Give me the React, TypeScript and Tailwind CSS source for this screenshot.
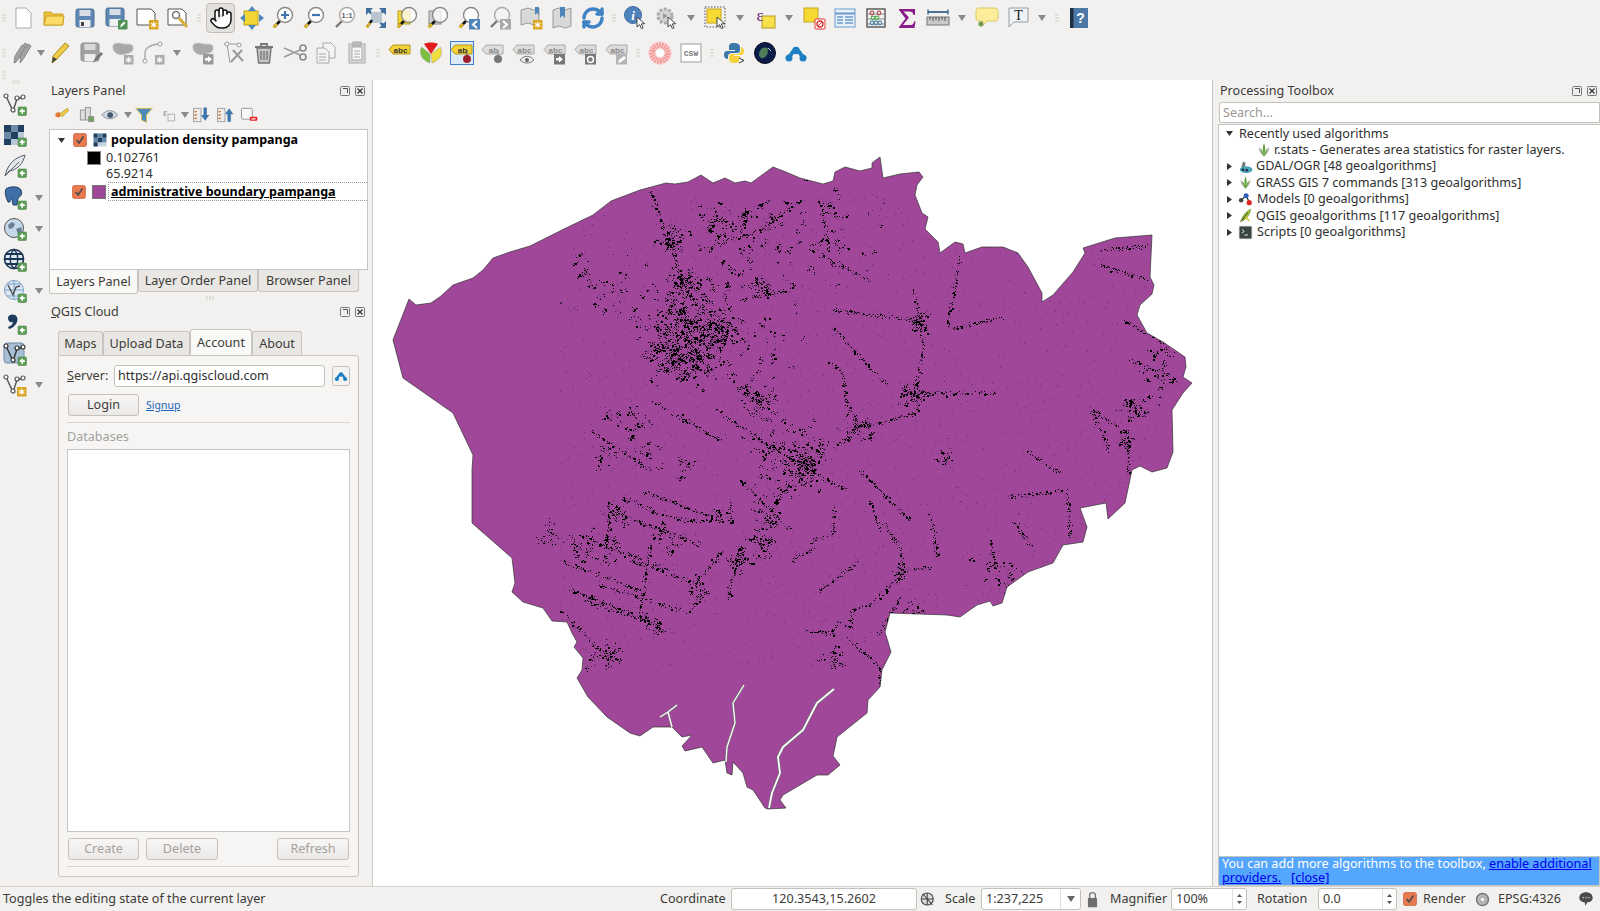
import { Hand, RefreshCw } from "lucide-react"
import type { ReactNode } from "react"

// ---- map data (page coordinates) ----
const outline =
  "M393 340 L409 299 L416 305 L431 303 L441 296 L453 285 L473 278 L483 270 L493 258 L510 252 L530 246 L566 228 L593 215 L611 201 L640 190 L666 183 L675 184 L688 182 L701 175 L713 183 L725 178 L735 183 L745 181 L751 183 L773 167 L786 172 L800 178 L823 184 L833 181 L835 172 L845 167 L860 171 L872 168 L872 163 L880 157 L883 178 L900 174 L919 172 L923 177 L917 185 L915 195 L922 213 L928 217 L925 229 L931 235 L938 242 L940 253 L955 242 L963 244 L965 253 L982 247 L1003 247 L1018 253 L1028 267 L1042 293 L1042 302 L1053 295 L1073 272 L1085 253 L1083 248 L1115 238 L1152 235 L1150 277 L1154 285 L1152 294 L1140 305 L1137 315 L1147 333 L1163 342 L1185 357 L1186 367 L1183 377 L1192 383 L1183 393 L1172 410 L1173 452 L1167 468 L1152 472 L1140 466 L1132 470 L1125 503 L1108 519 L1106 503 L1080 508 L1087 527 L1083 542 L1063 545 L1053 563 L1028 572 L1007 587 L1002 603 L993 606 L990 601 L977 605 L960 617 L947 615 L890 613 L885 632 L891 652 L882 670 L880 687 L868 700 L867 713 L837 737 L835 747 L833 756 L840 765 L828 775 L817 775 L783 795 L780 800 L786 808 L768 809 L765 808 L753 790 L747 787 L743 773 L733 762 L732 775 L727 773 L725 760 L713 763 L702 747 L685 751 L682 746 L692 735 L682 737 L672 727 L653 727 L640 736 L630 733 L607 717 L588 697 L577 678 L582 670 L583 658 L574 647 L577 642 L572 633 L567 622 L552 621 L543 608 L523 602 L512 592 L515 583 L512 558 L472 523 L472 470 L473 455 L453 413 L403 378 Z"

const clusters: number[][] = [
  [693, 325, 24, 1000], [668, 345, 14, 300], [715, 325, 12, 200], [680, 365, 12, 260], [708, 352, 14, 260],
  [683, 285, 9, 240], [672, 240, 7, 180], [756, 403, 9, 200], [790, 457, 20, 420], [805, 470, 10, 160],
  [760, 285, 5, 80], [716, 223, 9, 130], [743, 220, 6, 70], [610, 283, 20, 130], [586, 265, 6, 30],
  [610, 453, 8, 50], [626, 420, 10, 90], [645, 448, 9, 60], [683, 467, 5, 50], [617, 512, 7, 90],
  [550, 533, 6, 60], [580, 545, 9, 90], [610, 543, 9, 80], [668, 540, 8, 90], [740, 557, 7, 120],
  [760, 543, 8, 130], [725, 513, 5, 50], [767, 517, 7, 90], [698, 587, 5, 50], [653, 625, 7, 80],
  [613, 650, 6, 50], [600, 662, 8, 50], [858, 427, 7, 120], [918, 322, 6, 110], [913, 393, 7, 100],
  [1130, 410, 7, 130], [1160, 383, 9, 80], [1163, 357, 7, 60], [1128, 440, 5, 50], [943, 463, 5, 50],
  [815, 467, 9, 90], [903, 573, 4, 60], [833, 657, 6, 80], [913, 610, 5, 40], [1000, 575, 12, 80],
  [760, 345, 25, 150], [820, 240, 30, 110], [850, 230, 25, 70], [780, 250, 20, 120], [735, 265, 14, 90],
]

const roads: number[][][] = [
  [[650, 190], [660, 220], [672, 245], [678, 270], [690, 300]],
  [[833, 446], [850, 437], [858, 427], [880, 423], [917, 412], [917, 380], [923, 347], [920, 317], [913, 290]],
  [[913, 393], [997, 393]],
  [[833, 310], [917, 320]],
  [[833, 328], [887, 385]],
  [[827, 360], [843, 373], [845, 400], [860, 427]],
  [[1123, 320], [1163, 343]],
  [[1128, 433], [1128, 473]],
  [[1028, 452], [1060, 473]],
  [[1090, 408], [1128, 433]],
  [[960, 257], [947, 327]],
  [[953, 328], [1003, 317]],
  [[723, 550], [698, 580], [703, 593], [688, 613]],
  [[740, 560], [728, 587], [730, 598]],
  [[793, 560], [810, 550], [813, 540], [833, 533], [833, 507]],
  [[623, 497], [657, 513], [683, 520], [723, 520]],
  [[583, 600], [653, 623]],
  [[630, 560], [697, 583]],
  [[600, 585], [680, 610]],
  [[803, 630], [833, 633], [837, 622], [850, 627], [852, 610], [873, 602], [903, 573]],
  [[903, 573], [900, 547], [883, 523]],
  [[903, 570], [930, 567]],
  [[930, 513], [937, 557]],
  [[1007, 497], [1063, 490]],
  [[1067, 490], [1070, 537]],
  [[1013, 520], [1033, 550]],
  [[847, 637], [880, 667], [880, 687]],
  [[900, 597], [877, 637]],
  [[770, 200], [740, 215]],
  [[714, 408], [760, 440], [800, 465], [847, 490]],
  [[790, 480], [760, 530]],
  [[700, 250], [760, 230], [800, 200]],
  [[740, 300], [790, 290]],
  [[820, 200], [830, 260], [870, 280]],
  [[560, 560], [640, 590]],
  [[570, 590], [650, 620]],
  [[590, 540], [670, 570]],
  [[610, 510], [700, 545]],
  [[640, 490], [720, 520]],
  [[610, 500], [605, 560]],
  [[650, 545], [640, 610]],
  [[1090, 408], [1110, 450]],
  [[1130, 360], [1170, 375]],
  [[1100, 250], [1150, 245]],
  [[1100, 265], [1150, 280]],
  [[880, 530], [870, 500]],
  [[820, 590], [860, 560]],
  [[990, 540], [1000, 590]],
  [[590, 430], [650, 470]],
  [[650, 400], [720, 440]],
  [[740, 480], [790, 530]],
  [[860, 470], [910, 520]],
  [[560, 610], [610, 660]],
]

function buildSpecks() {
  let s = 20240611
  const rnd = () => {
    s = (s * 1664525 + 1013904223) >>> 0
    return s / 4294967296
  }
  const gauss = () => rnd() + rnd() + rnd() - 1.5
  let dark = ""
  let faint = ""
  const put = (x: number, y: number) => {
    const r = rnd()
    const w = r > 0.88 ? 2 : 1
    const d = `M${x.toFixed(0)} ${y.toFixed(0)}h${w}v${r > 0.94 ? 2 : 1}h-${w}z`
    if (r < 0.4) faint += d
    else dark += d
  }
  // grainy clusters: little knots of dots around random sub centres
  clusters.forEach(([cx, cy, rad, n]) => {
    let left = n
    while (left > 0) {
      const sx = cx + gauss() * rad * 1.9
      const sy = cy + gauss() * rad * 1.9
      const k = 2 + Math.floor(rnd() * 6)
      for (let i = 0; i < k; i++) put(sx + gauss() * 3, sy + gauss() * 3)
      left -= k
    }
  })
  roads.forEach((line) => {
    for (let i = 0; i < line.length - 1; i++) {
      const [x1, y1] = line[i]
      const [x2, y2] = line[i + 1]
      const n = Math.hypot(x2 - x1, y2 - y1) * 1.1
      for (let k = 0; k < n; k++) {
        const t = rnd()
        put(x1 + (x2 - x1) * t + gauss() * 2.2, y1 + (y2 - y1) * t + gauss() * 2.2)
      }
    }
  })
  // faint noise all over the middle of the map
  for (let i = 0; i < 1500; i++) {
    const x = 560 + rnd() * 600
    const y = 190 + rnd() * 480
    faint += `M${x.toFixed(0)} ${y.toFixed(0)}h1v1h-1z`
  }
  return { dark, faint }
}
const specks = buildSpecks()

function MapView() {
  return (
    <svg viewBox="373 80 839 806" className="w-full h-full block">
      <defs>
        <clipPath id="boundary">
          <path d={outline} />
        </clipPath>
      </defs>
      <path d={outline} fill="#a0479a" stroke="#333" strokeWidth="0.7" />
      <g clipPath="url(#boundary)">
        <path d={specks.faint} fill="#69316a" />
        <path d={specks.dark} fill="#000" />
      </g>
      <g fill="none" stroke="#6d6d6d" strokeLinejoin="round">
        <path d="M744 685 L733 703 L735 723 L727 747 L726 762" strokeWidth="2.4" />
        <path d="M834 689 L817 703 L803 730 L783 747 L778 757 L780 773 L772 793 L769 808" strokeWidth="3" />
        <path d="M660 717 L668 712 L677 705 M668 712 L672 727" strokeWidth="2.4" />
      </g>
      <g fill="none" stroke="#fff" strokeLinejoin="round">
        <path d="M744 685 L733 703 L735 723 L727 747 L726 762" strokeWidth="1.3" />
        <path d="M834 689 L817 703 L803 730 L783 747 L778 757 L780 773 L772 793 L769 808" strokeWidth="1.8" />
        <path d="M660 717 L668 712 L677 705 M668 712 L672 727" strokeWidth="1.4" />
      </g>
    </svg>
  )
}

// ---- icons ----
function Ic({ children, size = 24 }: { children: ReactNode; size?: number }) {
  return (
    <svg width={size} height={size} viewBox="0 0 24 24" className="shrink-0">
      {children}
    </svg>
  )
}

const Plus = () => (
  <g>
    <rect x="15" y="15" width="8.5" height="8.5" rx="1" fill="#5f9e58" stroke="#3f7a3c" strokeWidth="0.5" />
    <path d="M19.2 16.8v5M16.8 19.2h5" stroke="#fff" strokeWidth="1.7" />
  </g>
)
const Star = ({ fill = "#d9a520" }: { fill?: string }) => (
  <g>
    <rect x="14" y="14" width="9.5" height="9.5" fill={fill} />
    <path d="M18.7 15.8v6M15.9 17.2l5.6 3.2M15.9 20.4l5.6-3.2" stroke="#fff" strokeWidth="1.1" />
  </g>
)
const VShape = ({ c = "#555" }: { c?: string }) => (
  <g fill="#fff" stroke={c} strokeWidth="1.2">
    <path d="M3 4L10 19L14 7L20 5" fill="none" strokeWidth="1.4" />
    <circle cx="3" cy="4" r="2" />
    <circle cx="10" cy="18" r="2" />
    <circle cx="14" cy="6" r="2" />
    <circle cx="20" cy="5" r="2" />
  </g>
)
const Lens = ({ fill = "#fff", c = "#8a8a8a" }: { fill?: string; c?: string }) => (
  <g>
    <path d="M9 15L3 21" stroke="#111" strokeWidth="2.6" />
    <path d="M6 18L2.5 21.5" stroke="#e0b52a" strokeWidth="2.6" />
    <circle cx="14" cy="9" r="7.5" fill={fill} fillOpacity="0.75" stroke={c} strokeWidth="1.4" />
  </g>
)
const Cursor = () => (
  <path d="M13 11l0 10 2.6-2.4 1.8 4 1.7-.8-1.8-3.9 3.4-.2z" fill="#fff" stroke="#333" strokeWidth="0.9" />
)
const GreyLens = () => (
  <g>
    <path d="M9 15L3 21" stroke="#777" strokeWidth="2.4" />
    <circle cx="14" cy="9" r="7.5" fill="#f4f4f4" stroke="#aaa" strokeWidth="1.4" />
  </g>
)
const Tag = ({ fill, stroke, c, text = "abc" }: { fill: string; stroke: string; c: string; text?: string }) => (
  <g>
    <path d="M5 4H22V13H5L1 8.5Z" fill={fill} stroke={stroke} strokeWidth="1" />
    <text x="12.5" y="11.5" fontSize="8" fontWeight="700" textAnchor="middle" fill={c} fontFamily="Liberation Sans, sans-serif">
      {text}
    </text>
  </g>
)
const Blob = () => (
  <path d="M3 6C3 1 10 2 13 3C18 4 23 2 23 7C23 12 18 12 15 13C10 15 3 12 3 6Z" fill="#a8a8a8" stroke="#bbb" />
)
const GBadge = ({ children }: { children: ReactNode }) => (
  <g>
    <rect x="13" y="13" width="10.5" height="10.5" rx="1" fill="#999" />
    {children}
  </g>
)
const GlobeBase = ({ land = "#6a7f94", sea = "#c5d9ea" }: { land?: string; sea?: string }) => (
  <g>
    <circle cx="11" cy="11" r="9.5" fill={sea} stroke="#555" />
    <path d="M5 8l4-3 3 2-2 4-4 1zM13 12l5-2 1 4-4 3z" fill={land} />
  </g>
)

const icons: Record<string, ReactNode> = {
  newFile: <path d="M5 2H15L20 7V22H5Z" fill="#fff" stroke="#a9a9a9" />,
  open: (
    <g stroke="#c9a227">
      <path d="M2 6H9L11 8H21V19H2Z" fill="#eec23f" />
      <path d="M2 19L4 10H22L20.5 19Z" fill="#fbdc67" />
    </g>
  ),
  save: (
    <g>
      <rect x="3" y="3" width="18" height="18" rx="2" fill="#5f87b3" stroke="#4b6f96" />
      <rect x="6.5" y="4" width="11" height="6" fill="#d6dde6" />
      <rect x="6.5" y="14" width="11" height="7" fill="#eef0f2" />
      <rect x="8" y="16" width="3" height="4" fill="#444" />
    </g>
  ),
  saveAs: (
    <g>
      <rect x="2" y="2" width="18" height="18" rx="2" fill="#5f87b3" stroke="#4b6f96" />
      <rect x="5.5" y="3" width="11" height="6" fill="#d6dde6" />
      <rect x="5.5" y="13" width="11" height="7" fill="#eef0f2" />
      <rect x="14" y="14" width="9.5" height="9.5" rx="1" fill="#4f9156" />
      <path d="M16 21.5l1-3 3-3 1.5 1.5-3 3z" fill="#fff" />
    </g>
  ),
  newLayout: (
    <g>
      <path d="M2 3H16L20 7V19H2Z" fill="#fff" stroke="#555" />
      <Star />
    </g>
  ),
  layoutMgr: (
    <g>
      <path d="M2 3H16L20 7V19H2Z" fill="#fff" stroke="#555" />
      <circle cx="10" cy="9" r="3.5" fill="none" stroke="#777" strokeWidth="1.6" />
      <path d="M13 12L21 21" stroke="#d7ad3a" strokeWidth="3" />
    </g>
  ),
  pan: <Hand size={24} strokeWidth={1.5} color="#111" fill="#fff" />,
  panSel: (
    <g>
      <rect x="4" y="5" width="14" height="14" fill="#f2d635" stroke="#b9a21e" />
      <path d="M12 0l4 5h-8zM12 24l-4-5h8zM0 12l5-4v8zM24 12l-5 4v-8z" fill="#4d86bd" />
    </g>
  ),
  zoomIn: (
    <g>
      <Lens />
      <path d="M14 5v8M10 9h8" stroke="#3f76ad" strokeWidth="2.2" />
    </g>
  ),
  zoomOut: (
    <g>
      <Lens />
      <path d="M10 9h8" stroke="#3f76ad" strokeWidth="2.2" />
    </g>
  ),
  zoomOne: (
    <g>
      <path d="M9 15L3 21" stroke="#777" strokeWidth="2.4" />
      <circle cx="14" cy="9" r="7.5" fill="#fff" stroke="#aaa" strokeWidth="1.4" />
      <text x="14" y="12" fontSize="8" fontWeight="700" textAnchor="middle" fill="#666" fontFamily="Liberation Sans, sans-serif">
        1:1
      </text>
    </g>
  ),
  zoomFull: (
    <g>
      <path d="M2 2H9L6.5 4.5 9.5 8 8 9.5 4.5 6.5 2 9ZM22 2H15L17.5 4.5 14.5 8 16 9.5 19.5 6.5 22 9ZM22 22H15L17.5 19.5 14.5 16 16 14.5 19.5 17.5 22 15Z" fill="#3f6f9e" />
      <rect x="7" y="6" width="11" height="11" fill="#b9c6d2" />
      <path d="M8 14L3 21" stroke="#111" strokeWidth="2.4" />
      <path d="M6 17L2.5 21.5" stroke="#e0b52a" strokeWidth="2.4" />
    </g>
  ),
  zoomSel: (
    <g>
      <rect x="3" y="5" width="12" height="13" fill="#f2d635" stroke="#b9a21e" />
      <Lens />
    </g>
  ),
  zoomLayer: (
    <g>
      <rect x="3" y="5" width="12" height="13" fill="#ccc" stroke="#888" />
      <Lens />
    </g>
  ),
  zoomLast: (
    <g>
      <Lens />
      <rect x="12" y="13" width="11" height="10.5" fill="#4e85bb" />
      <path d="M20 15l-4 3.5 4 3.5" fill="none" stroke="#fff" strokeWidth="2" />
    </g>
  ),
  zoomNext: (
    <g>
      <GreyLens />
      <rect x="12" y="13" width="11" height="10.5" fill="#aaa" />
      <path d="M15 15l4 3.5-4 3.5" fill="none" stroke="#fff" strokeWidth="2" />
    </g>
  ),
  newView: (
    <g>
      <path d="M2 4L9 2L15 4L20 2V17L15 19L9 17L2 19Z" fill="#d8d8d6" stroke="#999" />
      <path d="M16 1h4v8l-2-2-2 2z" fill="#4e85bb" />
      <Star />
    </g>
  ),
  bookmarks: (
    <g>
      <path d="M3 4L9 2L15 4L21 2V20L15 22L9 20L3 22Z" fill="#d8d8d6" stroke="#999" />
      <path d="M10 1h5v11l-2.5-2.5L10 12z" fill="#4e85bb" />
    </g>
  ),
  refresh: <RefreshCw size={24} strokeWidth={3.4} color="#3f82c4" />,
  identify: (
    <g>
      <circle cx="9" cy="9" r="8.5" fill="#4f83bb" stroke="#3d6d9f" />
      <text x="9" y="14" fontSize="13" fontStyle="italic" fontWeight="700" textAnchor="middle" fill="#fff" fontFamily="Liberation Serif, serif">
        i
      </text>
      <Cursor />
    </g>
  ),
  runAction: (
    <g>
      <circle cx="10" cy="10" r="7" fill="#d7d7d7" stroke="#aaa" strokeWidth="3" strokeDasharray="3 1.5" />
      <path d="M8 7l5 3-5 3z" fill="#999" />
      <Cursor />
    </g>
  ),
  select: (
    <g>
      <rect x="1" y="1" width="20" height="20" fill="none" stroke="#555" strokeDasharray="1.5 1.5" />
      <rect x="3" y="3" width="14" height="14" fill="#f7d934" stroke="#c6a61f" />
      <Cursor />
    </g>
  ),
  expr: (
    <g>
      <rect x="9" y="10" width="13" height="12" fill="#f7e04b" stroke="#b49b1d" />
      <text x="7" y="15" fontSize="17" textAnchor="middle" fill="#6c1f7c" fontFamily="Liberation Serif, serif">
        ε
      </text>
    </g>
  ),
  deselect: (
    <g>
      <rect x="2" y="2" width="14" height="14" fill="#f7d934" stroke="#c6a61f" />
      <rect x="13" y="13" width="10" height="10" rx="1" fill="#fff" stroke="#d33" />
      <circle cx="18" cy="18" r="3" fill="none" stroke="#d33" strokeWidth="1.4" />
      <path d="M16 20l4-4" stroke="#d33" />
    </g>
  ),
  table: (
    <g stroke="#6b9bcb">
      <rect x="2" y="3" width="20" height="18" fill="#e8f0f8" />
      <path d="M2 7.5h20" strokeWidth="2" />
      <path d="M4 11h6M12 11h8M4 14h6M12 14h8M4 17h6M12 17h8" strokeWidth="1.4" />
    </g>
  ),
  stats: (
    <g>
      <rect x="3" y="3" width="18" height="18" fill="#f3f3f3" stroke="#555" strokeWidth="1.4" />
      <path d="M3 8h18M3 13h18M3 18h18" stroke="#888" />
      <g fill="none" strokeWidth="1.2">
        <circle cx="8" cy="7" r="1.8" stroke="#b55" />
        <circle cx="15" cy="7" r="1.8" stroke="#b55" />
        <circle cx="9" cy="12" r="1.8" stroke="#5a5" />
        <circle cx="13" cy="12" r="1.8" stroke="#5a5" />
        <circle cx="8" cy="17" r="1.8" stroke="#58a" />
        <circle cx="12" cy="17" r="1.8" stroke="#58a" />
        <circle cx="16" cy="17" r="1.8" stroke="#58a" />
      </g>
    </g>
  ),
  sigma: <path d="M4 3H20V9H18.5C18 6.5 17 5.5 14 5.5H8.5L14 11.5L8 19H15C18 19 18.6 17.5 19 15.5H20.5L19.5 22H4V21L10.5 12.5L4 4Z" fill="#8a1c8c" />,
  measure: (
    <g>
      <path d="M2 6h20" stroke="#26547f" strokeWidth="1.6" />
      <path d="M2 3.5v5M22 3.5v5" stroke="#26547f" strokeWidth="1.2" />
      <rect x="1" y="11" width="22" height="8" fill="#c8c8c8" stroke="#777" />
      <path d="M4 11v3M7 11v4M10 11v3M13 11v4M16 11v3M19 11v4" stroke="#555" />
    </g>
  ),
  tip: (
    <g>
      <path d="M4 2H20C22 2 23 3.5 23 5V12C23 14 21.5 15 20 15H12L7 20L7.5 15H4C2 15 1 13.5 1 12V5C1 3.5 2 2 4 2Z" fill="#fbed9b" stroke="#d8c762" />
      <circle cx="6" cy="18" r="2.5" fill="#6d9a50" />
    </g>
  ),
  textAnn: (
    <g>
      <path d="M3 2H22V16H8L3 21Z" fill="#eef3f7" stroke="#999" />
      <text x="12.5" y="14" fontSize="14" textAnchor="middle" fill="#222" fontFamily="Liberation Serif, serif">
        T
      </text>
    </g>
  ),
  help: (
    <g>
      <rect x="3" y="2" width="18" height="20" fill="#4c78a8" />
      <rect x="3" y="2" width="3.5" height="20" fill="#1e2f44" />
      <text x="13.5" y="17" fontSize="14" fontWeight="700" textAnchor="middle" fill="#fff" fontFamily="Liberation Sans, sans-serif">
        ?
      </text>
    </g>
  ),
  pencils: (
    <g fill="#a3a3a3" stroke="#8c8c8c">
      <path d="M4 22L6 12L14 2L17 4L9 16Z" />
      <path d="M9 22L10 13L17 3L20 5L13 17Z" />
      <path d="M3 22L4 15L11 4L14 6L7 18Z" />
    </g>
  ),
  pencil: (
    <g>
      <path d="M4 22L5 15L17 2L21 5L9 18Z" fill="#f0cc46" stroke="#a58a24" />
      <path d="M4 22L5 16L9 18Z" fill="#444" />
    </g>
  ),
  saveEdit: (
    <g>
      <rect x="2" y="2" width="18" height="18" rx="2" fill="#a2a2a2" stroke="#8f8f8f" />
      <rect x="5.5" y="3" width="11" height="6" fill="#dadada" />
      <rect x="5.5" y="13" width="11" height="7" fill="#ededed" />
      <path d="M14 22l2-5 6-6 2 2-6 6z" fill="#777" />
    </g>
  ),
  addPoly: (
    <g>
      <Blob />
      <Star fill="#aaa" />
    </g>
  ),
  addCurve: (
    <g>
      <path d="M4 19V12C4 7 10 3 19 3" fill="none" stroke="#aaa" strokeWidth="1.4" />
      <circle cx="4" cy="20" r="2" fill="#fff" stroke="#999" />
      <circle cx="19" cy="3" r="2" fill="#fff" stroke="#999" />
      <Star fill="#aaa" />
    </g>
  ),
  movePoly: (
    <g>
      <Blob />
      <GBadge>
        <path d="M15 17h3v-2l4 3.2-4 3.3v-2h-3z" fill="#fff" />
      </GBadge>
    </g>
  ),
  nodeTool: (
    <g>
      <path d="M3 3H18M6 3L9 22" stroke="#999" fill="none" />
      <circle cx="6" cy="3" r="2" fill="#fff" stroke="#999" />
      <circle cx="18" cy="4" r="2" fill="#fff" stroke="#999" />
      <path d="M10 21L21 9M12 9L22 20" stroke="#999" strokeWidth="2" />
    </g>
  ),
  trash: (
    <g fill="none" stroke="#777">
      <path d="M3 6H21M9 5V3H15V5" strokeWidth="1.8" />
      <path d="M5 7L6.5 22H17.5L19 7Z" fill="#c4c4c4" strokeWidth="1.4" />
      <path d="M9 10V19M12 10V19M15 10V19" strokeWidth="1.4" />
    </g>
  ),
  cut: (
    <g fill="none" stroke="#a0a0a0">
      <path d="M1 7L17 14M1 16L17 9" strokeWidth="1.8" />
      <circle cx="20" cy="7" r="3" strokeWidth="1.6" stroke="#888" />
      <circle cx="20" cy="16" r="3" strokeWidth="1.6" stroke="#888" />
    </g>
  ),
  copy: (
    <g fill="#f4f4f4" stroke="#aaa">
      <path d="M9 2H17L21 6V17H9Z" />
      <path d="M3 7H11L15 11V22H3Z" />
      <path d="M5 13H12M5 16H12M5 19H12" />
    </g>
  ),
  paste: (
    <g stroke="#aaa">
      <rect x="4" y="3" width="16" height="19" fill="#d9d9d9" />
      <rect x="7" y="6" width="10" height="13" fill="#f6f6f6" />
      <rect x="8" y="1" width="8" height="4" fill="#bbb" />
      <path d="M9 10H15M9 13H15M9 16H15" />
    </g>
  ),
  labelAbc: <Tag fill="#f2d236" stroke="#b0971f" c="#333" />,
  pie: (
    <g>
      <path d="M12 13L5 3C8 1 16 1 19 3Z" fill="#e02020" />
      <path d="M12 13L21.5 6C24 12 22 19 13 22Z" fill="#f0de3c" stroke="#999" strokeWidth="0.5" />
      <path d="M11 13L2.5 6C0 12 2 19 11 22Z" fill="#7cbf3c" stroke="#999" strokeWidth="0.5" />
    </g>
  ),
  labelPin: (
    <g>
      <rect x="0.5" y="0.5" width="23" height="23" fill="#dce9f7" stroke="#3f7fcc" />
      <Tag fill="#f2d236" stroke="#b0971f" c="#333" text="ab" />
      <path d="M17 9v6" stroke="#555" />
      <circle cx="17" cy="18" r="4" fill="#a01f2c" />
    </g>
  ),
  labelGrey: (
    <g>
      <Tag fill="#ddd" stroke="#aaa" c="#888" text="ab" />
      <path d="M17 9v6" stroke="#888" />
      <circle cx="17" cy="18" r="4" fill="#777" />
    </g>
  ),
  labelEye: (
    <g>
      <Tag fill="#ddd" stroke="#aaa" c="#888" />
      <path d="M8 19C12 14 18 14 22 19C18 23 12 23 8 19Z" fill="#eee" stroke="#777" />
      <circle cx="15" cy="19" r="2" fill="#666" />
    </g>
  ),
  labelMove: (
    <g>
      <Tag fill="#ddd" stroke="#aaa" c="#888" />
      <rect x="11" y="13" width="11" height="10.5" fill="#777" />
      <path d="M13 17h3v-2l4 3.2-4 3.3v-2h-3z" fill="#fff" />
    </g>
  ),
  labelRotate: (
    <g>
      <Tag fill="#ddd" stroke="#aaa" c="#888" />
      <rect x="11" y="13" width="11" height="10.5" fill="#777" />
      <circle cx="16.5" cy="18.5" r="3" fill="none" stroke="#fff" strokeWidth="1.5" />
    </g>
  ),
  labelEdit: (
    <g>
      <Tag fill="#ddd" stroke="#aaa" c="#888" />
      <rect x="11" y="13" width="11" height="10.5" fill="#b5b5b5" />
      <path d="M13 22l1-3 5-4 2 2-5 4z" fill="#fff" />
    </g>
  ),
  rose: (
    <g>
      <circle cx="12" cy="12" r="8" fill="none" stroke="#f69a9a" strokeWidth="6.5" strokeDasharray="2 0.6" />
      <circle cx="12" cy="12" r="11" fill="none" stroke="#fbd2d2" strokeWidth="1.6" strokeDasharray="2 1.4" />
      <circle cx="12" cy="12" r="3.6" fill="#fff" />
    </g>
  ),
  csw: (
    <g>
      <rect x="2" y="3" width="20" height="18" fill="#fff" stroke="#bbb" strokeWidth="1.5" />
      <text x="12" y="15" fontSize="8" fontWeight="700" textAnchor="middle" fill="#777" fontFamily="Liberation Mono, monospace">
        CSW
      </text>
    </g>
  ),
  python: (
    <g>
      <path d="M12 2C7 2 7 4 7 7V9H13V10H5C2 10 2 13 2 14C2 17 4 18 6 18V15C6 13 8 12 10 12H15C17 12 18 11 18 9V6C18 3 15 2 12 2Z" fill="#3b78aa" />
      <path d="M12 22C17 22 18 20 18 17V15H12V14H19C22 14 22 11 22 10C22 7 20 6 19 6V9C19 11 17 13 15 13H10C8 13 7 14 7 16V18C7 21 9 22 12 22Z" fill="#f5d13c" />
      <path d="M17 17l5 2.5-5 2.5" fill="#fff" stroke="#333" />
    </g>
  ),
  globe: (
    <g>
      <circle cx="12" cy="12" r="10.5" fill="#0c1c4a" stroke="#050a20" />
      <path d="M6 14C6 8 11 5 15 7C14 10 16 12 13 15C11 18 7 18 6 14Z" fill="#4f7d58" />
      <path d="M15 7l3 3" stroke="#cfd8e6" />
    </g>
  ),
  cloud: (
    <g>
      <path d="M5 16.5L8 12C10 8.5 14 8.5 16 12L19 16.5" fill="none" stroke="#1d7fc1" strokeWidth="4" />
      <circle cx="12" cy="9.5" r="3.8" fill="#1d7fc1" />
      <circle cx="5" cy="17" r="3.5" fill="#1d7fc1" />
      <circle cx="19" cy="17" r="3.5" fill="#1d7fc1" />
    </g>
  ),
  addVector: (
    <g>
      <VShape />
      <Plus />
    </g>
  ),
  addRaster: (
    <g>
      <rect x="1" y="2" width="20" height="20" fill="#b9c6d3" />
      <path d="M1 2h7v7H1zM8 9h7v7H8zM15 2h6v7h-6zM1 16h7v6H1z" fill="#21405f" />
      <path d="M8 2h7v7H8zM1 9h7v7H1z" fill="#6e8aa6" />
      <Plus />
    </g>
  ),
  addText: (
    <g>
      <path d="M2 22C4 12 10 4 22 1C20 10 14 16 6 17Z" fill="#e3e7ea" stroke="#56606b" />
      <path d="M2 22L16 8" stroke="#56606b" />
      <Plus />
    </g>
  ),
  addPg: (
    <g>
      <path d="M3 3C7 0 16 0 18 4C20 8 17 11 15 12L14 19H10L9 13C8 13 7 14 7 16H5C4 13 1 8 3 3Z" fill="#3f6fa8" stroke="#23405f" />
      <Plus />
    </g>
  ),
  addWms: (
    <g>
      <GlobeBase />
      <Plus />
    </g>
  ),
  addWcs: (
    <g>
      <circle cx="11" cy="11" r="9.5" fill="#dfe9f2" stroke="#1b3553" strokeWidth="1.6" />
      <path d="M1.5 11h19M3 6h16M3 16h16" stroke="#1b3553" strokeWidth="2" />
      <path d="M11 1.5C6 6 6 16 11 20.5C16 16 16 6 11 1.5Z" fill="none" stroke="#1b3553" strokeWidth="1.4" />
      <Plus />
    </g>
  ),
  addWfs: (
    <g>
      <circle cx="11" cy="11" r="9.5" fill="#dbe8f4" stroke="#7ba3c9" />
      <path d="M1.5 11h19M11 1.5v19M4 5h14M4 17h14" stroke="#7ba3c9" />
      <path d="M5 6L10 16L13 8L17 7" fill="none" stroke="#444" strokeWidth="1.3" />
      <Plus />
    </g>
  ),
  addComma: (
    <g>
      <path d="M5 7C5 3 12 2 14 6C16 11 11 17 6 18L5 16C8 15 10 13 10 11C7 12 5 10 5 7Z" fill="#1e3c5c" />
      <Plus />
    </g>
  ),
  addVirtual: (
    <g>
      <rect x="1" y="1" width="20" height="20" rx="3" fill="#a9bfd6" stroke="#6e8aa6" />
      <VShape c="#333" />
      <Plus />
    </g>
  ),
  newShape: (
    <g>
      <VShape />
      <Star />
    </g>
  ),
  // panel mini toolbar
  style: (
    <g>
      <path d="M3 11C4 8 8 8 10 10L8 15L3 14Z" fill="#e07b39" />
      <path d="M8 11L17 4L19 6L11 14Z" fill="#f1cc46" stroke="#b39a28" />
    </g>
  ),
  addGroup: (
    <g fill="#ddd" stroke="#888">
      <rect x="4" y="6" width="6" height="12" />
      <rect x="10" y="3" width="6" height="15" />
      <rect x="14" y="14" width="6" height="6" fill="#6fa55c" />
    </g>
  ),
  eye: (
    <g>
      <path d="M1 12C6 5 15 5 20 12C15 18 6 18 1 12Z" fill="#ccd7e2" stroke="#7c8894" />
      <circle cx="11" cy="12" r="3.4" fill="#44596e" />
    </g>
  ),
  filter: <path d="M2 4H22L15 12V21L9 18V12Z" fill="#4c8ab8" stroke="#e7c340" />,
  filterExpr: (
    <g>
      <text x="6" y="13" fontSize="13" fill="#888" fontFamily="Liberation Serif, serif">
        ε
      </text>
      <rect x="12" y="11" width="8" height="8" fill="none" stroke="#aaa" />
    </g>
  ),
  expand: (
    <g>
      <rect x="3" y="4" width="9" height="16" fill="#ececec" stroke="#999" />
      <path d="M4 8h3M4 12h3M4 16h3" stroke="#d8772f" strokeWidth="1.6" />
      <path d="M15 3h4v9h3l-5 7-5-7h3z" fill="#3f76ad" />
    </g>
  ),
  collapse: (
    <g>
      <rect x="3" y="4" width="9" height="16" fill="#ececec" stroke="#999" />
      <path d="M4 8h3M4 12h3M4 16h3" stroke="#d8772f" strokeWidth="1.6" />
      <path d="M15 20h4v-9h3l-5-7-5 7h3z" fill="#3f76ad" />
    </g>
  ),
  removeLayer: (
    <g>
      <rect x="3" y="4" width="13" height="13" rx="1.5" fill="#f8f8f8" stroke="#888" />
      <rect x="13" y="14" width="9" height="5" rx="1" fill="#e22" />
      <rect x="15" y="16" width="5" height="1.4" fill="#fff" />
    </g>
  ),
  grass: (
    <g fill="none" strokeWidth="1.8">
      <path d="M12 21C5 17 4 11 4 7C7 10 11 14 12 21Z" fill="#bfbfbf" />
      <path d="M12 21C19 17 20 11 20 7C17 10 13 14 12 21Z" fill="#bfbfbf" />
      <path d="M12 20C9 13 10 7 12 2C14 7 15 13 12 20Z" fill="#63a33d" />
      <path d="M12 21L7 11M12 21L17 11" stroke="#63a33d" />
    </g>
  ),
  gdal: (
    <g>
      <path d="M5 14L8 4L12 6L11 14Z" fill="#777" />
      <ellipse cx="13" cy="17" rx="10" ry="5.5" fill="#44a4b4" />
      <circle cx="8" cy="17" r="2" fill="#224" />
      <circle cx="14" cy="18" r="2" fill="#224" />
    </g>
  ),
  models: (
    <g>
      <path d="M5 13L13 6L18 16" stroke="#222" strokeWidth="2" fill="none" />
      <circle cx="5" cy="13" r="3.6" fill="#444" />
      <circle cx="13" cy="6" r="4" fill="#2f62b5" />
      <circle cx="18" cy="17" r="4.2" fill="#e02525" />
    </g>
  ),
  qgis: (
    <g>
      <path d="M4 22C8 12 12 6 20 2C19 10 15 17 4 22Z" fill="#a9cf3c" stroke="#5c7d1e" />
      <path d="M6 20L16 7" stroke="#222" strokeWidth="1.4" />
      <path d="M12 14l6 7" stroke="#d9c22a" strokeWidth="2.4" />
    </g>
  ),
  scripts: (
    <g>
      <rect x="2" y="2" width="20" height="20" rx="2" fill="#3b4540" stroke="#aab" />
      <path d="M6 7l4 3-4 3M10 16h6" stroke="#dfe" strokeWidth="1.4" fill="none" />
    </g>
  ),
  checkbox: (
    <g>
      <rect x="1" y="1" width="22" height="22" rx="3" fill="#ea7a4f" stroke="#c9643d" strokeWidth="1.4" />
      <path d="M6 12l4.5 5L18 6" fill="none" stroke="#4d4d4d" strokeWidth="3" />
    </g>
  ),
  raster: (
    <g>
      <rect x="1" y="1" width="22" height="22" fill="#c7d3de" />
      <path d="M1 1h7v7H1zM16 1h7v7h-7zM8 8h8v8H8zM1 16h7v7H1z" fill="#1f3d5c" />
      <path d="M8 1h8v7H8zM1 8h7v8H1zM16 8h7v8h-7z" fill="#5f85a8" />
    </g>
  ),
  epsg: (
    <g>
      <circle cx="12" cy="12" r="9.5" fill="#bbb" stroke="#777" strokeWidth="2.5" />
      <circle cx="12" cy="12" r="4" fill="#f2f1f0" stroke="#777" />
    </g>
  ),
  chat: (
    <g>
      <path d="M12 2C18 2 22 5.5 22 10C22 14.5 18 17 14 17L11 22L10 17C6 16.5 2 14.5 2 10C2 5.5 6 2 12 2Z" fill="#4a4a4a" />
      <path d="M7 10h1.5M11.3 10h1.5M15.6 10h1.5" stroke="#fff" strokeWidth="2" />
    </g>
  ),
  crsOff: (
    <g>
      <circle cx="11" cy="12" r="8" fill="#ddd" stroke="#555" strokeWidth="1.6" />
      <path d="M5 5L18 20M4 12h15M11 4v16" stroke="#444" strokeWidth="1.4" />
    </g>
  ),
  lock: (
    <g>
      <path d="M8 11V6C8 1 16 1 16 6V11" fill="none" stroke="#777" strokeWidth="2" />
      <rect x="5.5" y="10" width="13" height="13" rx="1" fill="#6e6e6e" />
    </g>
  ),
}

// ---- small parts ----
function ToolIcon({ name, w = 31 }: { name: string; w?: number }) {
  return (
    <span className="flex items-center justify-center shrink-0" style={{ width: w }}>
      <Ic>{icons[name]}</Ic>
    </span>
  )
}

function Caret({ w = 14, c = "#8a8a8a" }: { w?: number; c?: string }) {
  return (
    <span className="flex items-center justify-center shrink-0" style={{ width: w }}>
      <svg width="8" height="6" viewBox="0 0 8 6" className="shrink-0">
        <path d="M0 0H8L4 6Z" fill={c} />
      </svg>
    </span>
  )
}

function Grip({ w = 12 }: { w?: number }) {
  return (
    <span className="flex items-center justify-center shrink-0" style={{ width: w }}>
      <svg width="4" height="8" viewBox="0 0 4 8">
        <path d="M0 1h4M0 4h4M0 7h4" stroke="#d2cfcb" strokeWidth="1" />
      </svg>
    </span>
  )
}

function DockButtons() {
  return (
    <span className="flex items-center gap-[5px]">
      <svg width="10" height="10" viewBox="0 0 10 10">
        <rect x="0.5" y="0.5" width="9" height="9" rx="1" fill="#eee" stroke="#777" />
        <path d="M3 2.5H7.5V7" fill="none" stroke="#555" />
      </svg>
      <svg width="10" height="10" viewBox="0 0 10 10">
        <rect x="0.5" y="0.5" width="9" height="9" rx="1" fill="#eee" stroke="#777" />
        <path d="M2.5 2.5l5 5M7.5 2.5l-5 5" stroke="#333" strokeWidth="1.2" />
      </svg>
    </span>
  )
}

function Tri({ open }: { open?: boolean }) {
  return (
    <svg width="7" height="7" viewBox="0 0 7 7" className="shrink-0">
      {open ? <path d="M0 1H7L3.5 6Z" fill="#333" /> : <path d="M1 0V7L6 3.5Z" fill="#333" />}
    </svg>
  )
}

function Btn({ label, disabled, w = "w-[71px]" }: { label: string; disabled?: boolean; w?: string }) {
  return (
    <div
      className={`${w} h-[22px] flex items-center justify-center rounded-[3px] border border-[#c4c0ba] bg-gradient-to-b from-[#f8f7f6] to-[#ebe9e7] ${disabled ? "text-[#a5a29e]" : "text-[#3c3b37]"}`}
    >
      {label}
    </div>
  )
}

function Spin({ w, value }: { w: string; value: string }) {
  return (
    <div className={`${w} h-[22px] flex items-center rounded-[3px] border border-[#c4c0ba] bg-white pl-[4px] shrink-0`}>
      <span className="flex-1">{value}</span>
      <span className="w-[14px] h-full flex flex-col items-center justify-center gap-[4px] border-l border-[#e2dfdb]">
        <svg width="5" height="3" viewBox="0 0 5 3">
          <path d="M0 3L2.5 0L5 3Z" fill="#555" />
        </svg>
        <svg width="5" height="3" viewBox="0 0 5 3">
          <path d="M0 0H5L2.5 3Z" fill="#555" />
        </svg>
      </span>
    </div>
  )
}

const row1: (string | number)[] = [
  "newFile", "open", "save", "saveAs", "newLayout", "layoutMgr", -1,
  "pan", "panSel", "zoomIn", "zoomOut", "zoomOne", "zoomFull", "zoomSel", "zoomLayer", "zoomLast", "zoomNext", "newView", "bookmarks", "refresh", -1,
  "identify", "runAction", -2, "select", -2, "expr", -2, "deselect", "table", "stats", "sigma", "measure", -2, "tip", "textAnn", -2, -1, "help",
]
const row2: (string | number)[] = [
  "pencils", -3, "pencil", "saveEdit", "addPoly", "addCurve", -2, "movePoly", "nodeTool", "trash", "cut", "copy", "paste", -1,
  "labelAbc", "pie", "labelPin", "labelGrey", "labelEye", "labelMove", "labelRotate", "labelEdit", -1, "rose", "csw", -1, "python", "globe", "cloud",
]

function ToolRow({ items }: { items: (string | number)[] }) {
  return (
    <div className="h-[35px] flex items-center">
      <Grip w={7} />
      {items.map((it, i) =>
        it === -1 ? (
          <Grip key={i} w={12} />
        ) : it === -2 ? (
          <Caret key={i} w={18} />
        ) : it === -3 ? (
          <Caret key={i} w={6} />
        ) : it === "pan" ? (
          <span key={i} className="w-[29px] h-[30px] mx-[1px] flex items-center justify-center rounded-[4px] border border-[#c2bfba] bg-[#e2e0dd] shrink-0">
            <Ic>{icons.pan}</Ic>
          </span>
        ) : (
          <ToolIcon key={i} name={it as string} />
        ),
      )}
    </div>
  )
}

const sideIcons: [string, boolean][] = [
  ["addVector", false], ["addRaster", false], ["addText", false], ["addPg", true], ["addWms", true],
  ["addWcs", false], ["addWfs", true], ["addComma", false], ["addVirtual", false], ["newShape", true],
]

const miniIcons: (string | number)[] = ["style", "addGroup", "eye", -2, "filter", "filterExpr", -2, "expand", "collapse", "removeLayer"]

const algs: [string, string, number][] = [
  ["gdal", "GDAL/OGR [48 geoalgorithms]", 0],
  ["grass", "GRASS GIS 7 commands [313 geoalgorithms]", 0],
  ["models", "Models [0 geoalgorithms]", 1],
  ["qgis", "QGIS geoalgorithms [117 geoalgorithms]", 0],
  ["scripts", "Scripts [0 geoalgorithms]", 1],
]

export default function App() {
  return (
    <div className="w-[1600px] h-[911px] flex flex-col overflow-hidden bg-[#f2f1f0] text-[#3c3b37] text-[12.6px] leading-[16px] [font-family:'Noto_Sans',sans-serif]">
      {/* toolbars */}
      <div className="h-[80px] shrink-0">
        <ToolRow items={row1} />
        <ToolRow items={row2} />
        <div className="h-[10px] flex items-center">
          <Grip w={7} />
        </div>
      </div>

      <div className="flex h-[806px]">
        {/* left toolbar */}
        <div className="w-[48px] shrink-0 flex flex-col items-start">
          <div className="h-[8px] w-[31px] flex justify-center">
            <svg width="8" height="4" viewBox="0 0 8 4">
              <path d="M1 0v4M4 0v4M7 0v4" stroke="#d2cfcb" />
            </svg>
          </div>
          {sideIcons.map(([n, caret]) => (
            <div key={n} className="h-[31.3px] flex items-center pl-[3px] shrink-0">
              <Ic>{icons[n]}</Ic>
              {caret && <Caret w={24} />}
            </div>
          ))}
        </div>

        {/* left dock */}
        <div className="w-[325px] shrink-0 flex flex-col border-r border-[#d0ccc7]">
          <div className="h-[21px] flex items-center justify-between pl-[3px] pr-[7px]">
            <span>Layers Panel</span>
            <DockButtons />
          </div>
          <div className="h-[28px] flex items-center pl-[3px]">
            {miniIcons.map((m, i) =>
              m === -2 ? (
                <Caret key={i} w={9} />
              ) : (
                <span key={i} className="w-[24px] flex items-center justify-center shrink-0">
                  <Ic size={20}>{icons[m as string]}</Ic>
                </span>
              ),
            )}
          </div>
          <div className="h-[141px] ml-[1px] w-[319px] bg-white border border-[#c8c4bf] pt-[1px] text-[#2e2e2e]">
            <div className="h-[18px] flex items-center pl-[8px]">
              <Tri open />
              <span className="ml-[8px]"><Ic size={14}>{icons.checkbox}</Ic></span>
              <span className="ml-[6px]"><Ic size={14}>{icons.raster}</Ic></span>
              <span className="ml-[4px] font-bold text-black text-[12.5px]">population density pampanga</span>
            </div>
            <div className="h-[17px] flex items-center pl-[37px]">
              <span className="w-[14px] h-[14px] bg-black border border-[#888]" />
              <span className="ml-[5px]">0.102761</span>
            </div>
            <div className="h-[16px] flex items-center pl-[56px]">65.9214</div>
            <div className="h-[19px] flex items-center pl-[22px]">
              <Ic size={14}>{icons.checkbox}</Ic>
              <span className="ml-[6px] w-[14px] h-[14px] bg-[#a0479a] border border-[#777] shrink-0" />
              <span className="ml-[2px] flex-1 h-[19px] flex items-center pl-[2px] border border-dotted border-[#999] border-r-0 font-bold text-black text-[12.5px]">
                <span className="underline">administrative boundary pampanga</span>
              </span>
            </div>
          </div>
          <div className="h-[24px] ml-[1px] flex items-start">
            <div className="w-[89px] h-[24px] flex items-center justify-center bg-[#f9f9f8] border border-t-0 border-[#c8c4bf] rounded-b-[3px]">Layers Panel</div>
            <div className="w-[120px] h-[22px] flex items-center justify-center bg-[#e9e7e4] border border-t-0 border-[#c8c4bf] rounded-b-[3px]">Layer Order Panel</div>
            <div className="w-[101px] h-[22px] flex items-center justify-center bg-[#e9e7e4] border border-t-0 border-[#c8c4bf] rounded-b-[3px]">Browser Panel</div>
          </div>
          <div className="h-[7px] flex justify-center items-center">
            <svg width="8" height="4" viewBox="0 0 8 4">
              <path d="M1 0v4M4 0v4M7 0v4" stroke="#d2cfcb" />
            </svg>
          </div>
          <div className="h-[22px] flex items-center justify-between pl-[3px] pr-[7px]">
            <span>
              <span className="underline">Q</span>GIS Cloud
            </span>
            <DockButtons />
          </div>
          <div className="h-[32px] pl-[10px] flex items-end">
            <div className="w-[45px] h-[24px] flex items-center justify-center bg-[#e9e7e4] border border-b-0 border-[#c8c4bf] rounded-t-[3px]">Maps</div>
            <div className="w-[87px] h-[24px] flex items-center justify-center bg-[#e9e7e4] border border-b-0 border-[#c8c4bf] rounded-t-[3px]">Upload Data</div>
            <div className="w-[62px] h-[26px] flex items-center justify-center bg-[#f9f9f8] border border-b-0 border-[#c8c4bf] rounded-t-[3px]">Account</div>
            <div className="w-[50px] h-[24px] flex items-center justify-center bg-[#e9e7e4] border border-b-0 border-[#c8c4bf] rounded-t-[3px]">About</div>
          </div>
          <div className="ml-[10px] w-[301px] h-[522px] bg-[#f6f5f4] border border-[#c8c4bf] rounded-b-[3px] rounded-tr-[3px] px-[8px] pt-[9px] flex flex-col">
            <div className="h-[22px] flex items-center">
              <span className="w-[47px]">
                <span className="underline">S</span>erver:
              </span>
              <div className="w-[211px] h-[22px] flex items-center bg-white border border-[#c4c0ba] rounded-[3px] pl-[3px] text-[#2e2e2e]">https://api.qgiscloud.com</div>
              <div className="ml-[7px] w-[18px] h-[20px] flex items-center justify-center bg-[#f4f3f2] border border-[#c4c0ba] rounded-[3px]">
                <Ic size={14}>{icons.cloud}</Ic>
              </div>
            </div>
            <div className="mt-[7px] h-[22px] flex items-center pl-[1px]">
              <Btn label="Login" />
              <span className="ml-[7px] text-[10.5px] text-[#1a63b8] underline">Signup</span>
            </div>
            <div className="mt-[6px] h-[1px] bg-[#d8d5d1]" />
            <div className="mt-[6px] h-[16px] flex items-center text-[#a5a29e]">Databases</div>
            <div className="mt-[4px] h-[383px] bg-white border border-[#c8c4bf]" />
            <div className="mt-[6px] h-[22px] flex items-center pl-[1px] gap-[7px]">
              <Btn label="Create" disabled />
              <Btn label="Delete" disabled w="w-[72px]" />
              <span className="flex-1" />
              <span className="mr-[1px]">
                <Btn label="Refresh" disabled w="w-[72px]" />
              </span>
            </div>
            <div className="mt-[6px] h-[1px] bg-[#d8d5d1]" />
          </div>
        </div>

        {/* map canvas */}
        <div className="w-[839px] shrink-0 bg-white">
          <MapView />
        </div>

        {/* processing toolbox */}
        <div className="flex-1 min-w-0 flex flex-col border-l border-[#c8c4bf] pl-[5px]">
          <div className="h-[22px] shrink-0 flex items-center justify-between pl-[2px] pr-[3px]">
            <span>Processing Toolbox</span>
            <DockButtons />
          </div>
          <div className="h-[21px] ml-[1px] shrink-0 flex items-center bg-white border border-[#c4c0ba] rounded-l-[3px] pl-[3px] text-[#9a9792]">Search...</div>
          <div className="mt-[1px] h-[732px] shrink-0 bg-white border-l border-t border-[#c8c4bf] text-[#2e2e2e]">
            <div className="h-[17px] flex items-center pl-[7px]">
              <Tri open />
              <span className="ml-[6px]">Recently used algorithms</span>
            </div>
            <div className="h-[16px] flex items-center pl-[37px]">
              <Ic size={16}>{icons.grass}</Ic>
              <span className="ml-[2px]">r.stats - Generates area statistics for raster layers.</span>
            </div>
            {algs.map(([ic, label, extra]) => (
              <div key={label} className="h-[16.5px] flex items-center pl-[7px]">
                <Tri />
                <span className="ml-[5px]"><Ic size={15}>{icons[ic]}</Ic></span>
                <span style={{ marginLeft: 3 + extra }}>{label}</span>
              </div>
            ))}
          </div>
          <div className="h-[30px] shrink-0 bg-[#55a6ff] border border-[#c8c4bf] px-[3px] leading-[14px] text-white whitespace-nowrap overflow-hidden">
            <div>
              You can add more algorithms to the toolbox, <span className="text-[#0000ee] underline">enable additional</span>
            </div>
            <div className="text-[#0000ee]">
              <span className="underline">providers.</span>&nbsp;&nbsp;&nbsp;<span className="underline">[close]</span>
            </div>
          </div>
        </div>
      </div>

      {/* status bar */}
      <div className="h-[25px] shrink-0 flex items-center border-t border-[#d5d1cc] pl-[3px] whitespace-nowrap">
        <span className="w-[657px] shrink-0">Toggles the editing state of the current layer</span>
        <span className="w-[71px] shrink-0">Coordinate</span>
        <div className="w-[186px] h-[22px] shrink-0 flex items-center justify-center bg-white border border-[#c4c0ba] rounded-[3px]">120.3543,15.2602</div>
        <span className="w-[22px] shrink-0 flex justify-center"><Ic size={18}>{icons.crsOff}</Ic></span>
        <span className="ml-[6px] w-[36px] shrink-0">Scale</span>
        <div className="w-[100px] h-[22px] shrink-0 flex items-center bg-white border border-[#c4c0ba] rounded-[3px] pl-[4px]">
          <span className="flex-1">1:237,225</span>
          <span className="w-[20px] h-full flex items-center justify-center border-l border-[#e2dfdb]">
            <Caret w={10} c="#666" />
          </span>
        </div>
        <span className="w-[22px] shrink-0 flex justify-center"><Ic size={17}>{icons.lock}</Ic></span>
        <span className="ml-[7px] w-[61px] shrink-0">Magnifier</span>
        <Spin w="w-[76px]" value="100%" />
        <span className="ml-[10px] w-[61px] shrink-0">Rotation</span>
        <Spin w="w-[79px]" value="0.0" />
        <span className="ml-[6px]"><Ic size={14}>{icons.checkbox}</Ic></span>
        <span className="ml-[6px] w-[50px] shrink-0">Render</span>
        <span className="ml-[2px]"><Ic size={15}>{icons.epsg}</Ic></span>
        <span className="ml-[8px] w-[72px] shrink-0">EPSG:4326</span>
        <span className="ml-[8px]"><Ic size={16}>{icons.chat}</Ic></span>
      </div>
    </div>
  )
}
